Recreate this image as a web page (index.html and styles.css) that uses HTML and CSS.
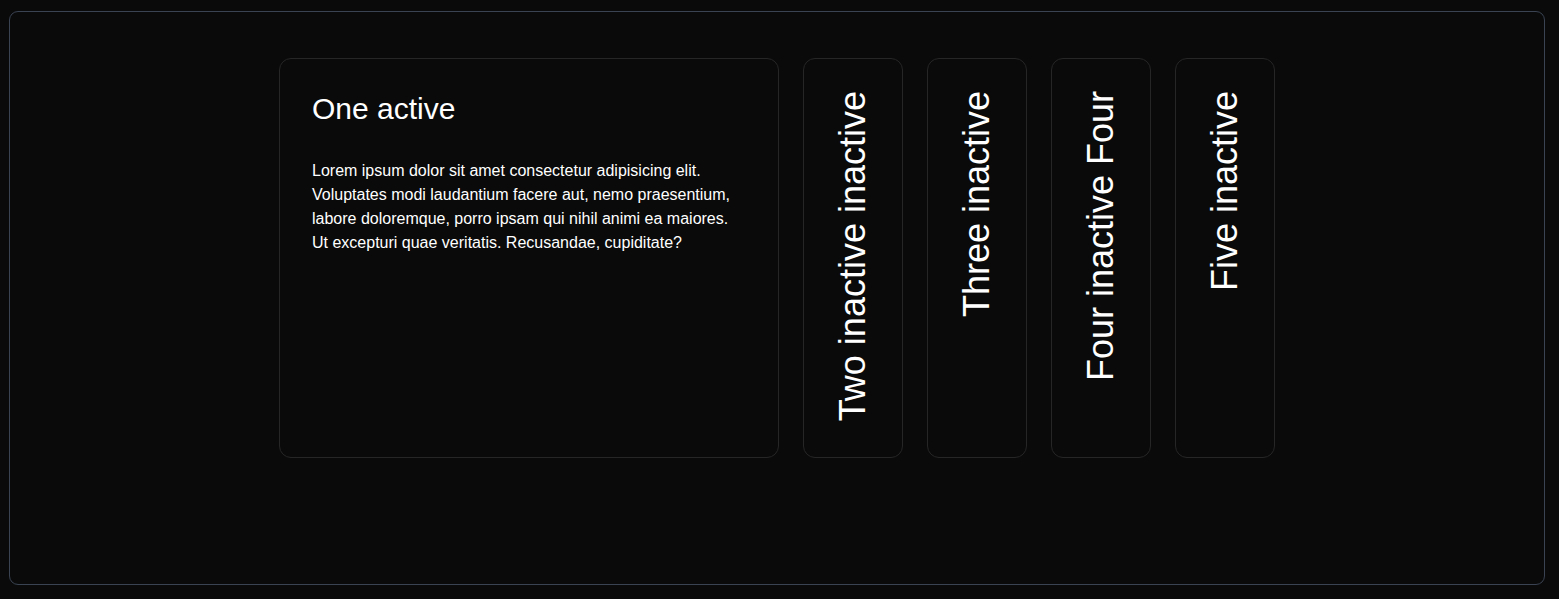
FILE: index.html
```html
<!DOCTYPE html>
<html lang="en">
<head>
<meta charset="utf-8">
<title>Accordion</title>
<link rel="stylesheet" href="styles.css">
</head>
<body>
<div class="frame">
  <div class="accordion">
    <div class="card active">
      <h2 class="title">One active</h2>
      <p class="text">Lorem ipsum dolor sit amet consectetur adipisicing elit. Voluptates modi laudantium facere aut, nemo praesentium, labore doloremque, porro ipsam qui nihil animi ea maiores. Ut excepturi quae veritatis. Recusandae, cupiditate?</p>
    </div>
    <div class="card inactive"><span class="vtitle">Two inactive inactive</span></div>
    <div class="card inactive"><span class="vtitle">Three inactive</span></div>
    <div class="card inactive"><span class="vtitle">Four inactive Four</span></div>
    <div class="card inactive"><span class="vtitle">Five inactive</span></div>
  </div>
</div>
</body>
</html>
```

FILE: styles.css
```css
html, body {
  background: #0a0a0a;
}
body {
  margin: 11px 14px 14px 9px;
  font-family: "Liberation Sans", Arial, sans-serif;
  color: #ffffff;
}
.frame {
  box-sizing: border-box;
  height: 574px;
  border: 1px solid #3a4352;
  border-radius: 9px;
  padding-top: 46px;
}
.accordion {
  display: flex;
  justify-content: center;
  gap: 24px;
}
.card {
  box-sizing: border-box;
  height: 400px;
  border: 1px solid #262626;
  border-radius: 12px;
  background: #0a0a0a;
}
.active {
  width: 500px;
  padding: 32px;
}
.title {
  margin: 0 0 32px;
  font-size: 30px;
  font-weight: 400;
  line-height: 36px;
}
.text {
  margin: 0;
  font-size: 16px;
  line-height: 24px;
}
.inactive {
  width: 100px;
  padding: 32px 0;
  display: flex;
  justify-content: center;
  align-items: flex-start;
}
.vtitle {
  writing-mode: vertical-rl;
  transform: rotate(180deg);
  font-size: 36px;
  line-height: normal;
  white-space: nowrap;
}
```
